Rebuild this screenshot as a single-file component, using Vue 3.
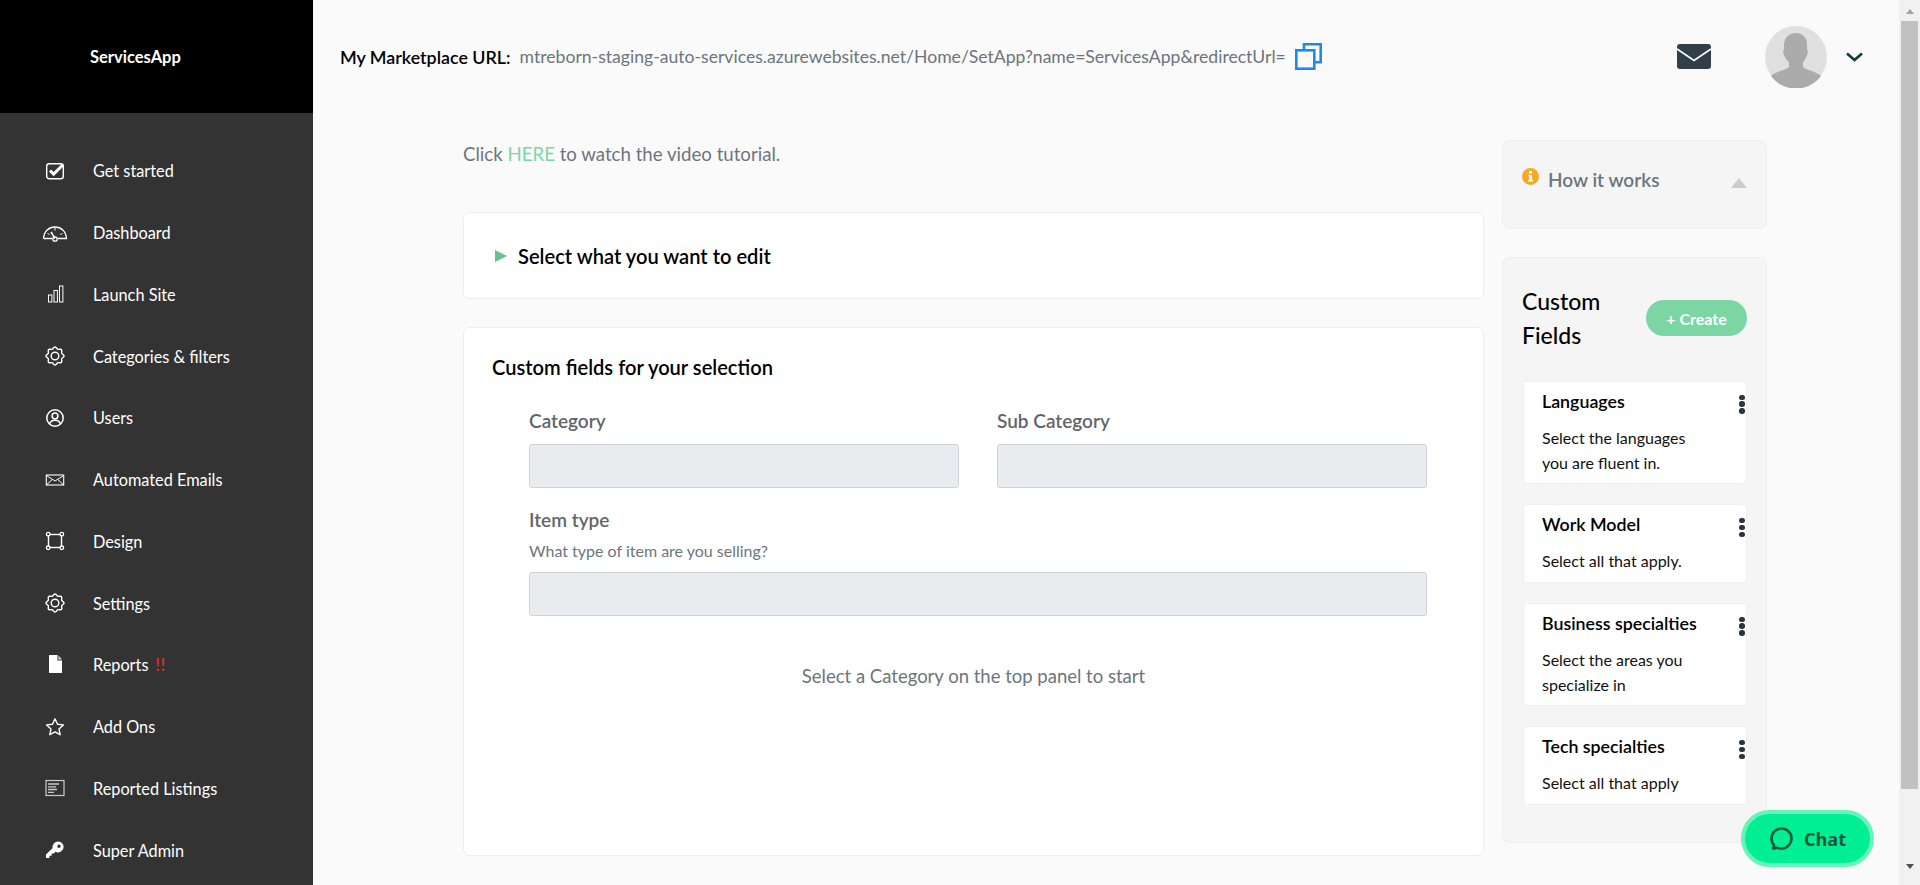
<script setup>
const nav = [
  { label: 'Get started', icon: 'check' },
  { label: 'Dashboard', icon: 'gauge' },
  { label: 'Launch Site', icon: 'bars' },
  { label: 'Categories & filters', icon: 'gear' },
  { label: 'Users', icon: 'user' },
  { label: 'Automated Emails', icon: 'mail' },
  { label: 'Design', icon: 'design' },
  { label: 'Settings', icon: 'gear' },
  { label: 'Reports', icon: 'file', alert: '!!' },
  { label: 'Add Ons', icon: 'star' },
  { label: 'Reported Listings', icon: 'list' },
  { label: 'Super Admin', icon: 'key' }
]
const fields = [
  { title: 'Languages', text: 'Select the languages you are fluent in.' },
  { title: 'Work Model', text: 'Select all that apply.' },
  { title: 'Business specialties', text: 'Select the areas you specialize in' },
  { title: 'Tech specialties', text: 'Select all that apply' }
]
const gearPoints = Array.from({ length: 64 }, (_, i) => {
  const a = (i / 64) * Math.PI * 2
  const r = 8.1 + 0.9 * Math.cos(8 * a)
  return `${(10 + r * Math.cos(a)).toFixed(2)},${(10 + r * Math.sin(a)).toFixed(2)}`
}).join(' ')
</script>

<template>
  <div class="app">
    <aside class="sidebar">
      <div class="brand">ServicesApp</div>
      <nav class="nav">
        <a v-for="item in nav" :key="item.label" class="nav-item">
          <svg class="nav-icon" viewBox="0 0 20 20" fill="none" stroke="#fff" stroke-width="1.3">
            <template v-if="item.icon === 'check'">
              <rect x="1.7" y="2.7" width="16.600" height="15" rx="2.500" stroke-width="1.400" />
              <path d="M5 9.500l3.600 3.600L18 3.800" stroke-width="3" />
            </template>
            <template v-else-if="item.icon === 'gauge'">
              <path d="M-1.500 15.500C-1 8 4 4 10 4s11 4 11.500 11.500H13M7 15.500H-1.500" />
              <path d="M6 9l4 6.500" stroke-width="1.600" />
              <circle cx="10" cy="16" r="2.200" />
              <path d="M10 4.500v3M2.500 10.500l2 1M17.500 10.500l-2 1" stroke-width="1" />
            </template>
            <template v-else-if="item.icon === 'bars'">
              <rect x="3.500" y="11" width="3.400" height="7" stroke-width="1" />
              <rect x="9" y="6.500" width="3.400" height="11.500" stroke-width="1" />
              <rect x="14.500" y="2" width="3.400" height="16" stroke-width="1" />
            </template>
            <template v-else-if="item.icon === 'gear'">
              <polygon :points="gearPoints" stroke-width="1.400" />
              <circle cx="10" cy="10" r="3.800" stroke-width="1.400" />
            </template>
            <template v-else-if="item.icon === 'user'">
              <circle cx="10" cy="10" r="8.200" stroke-width="1.500" />
              <circle cx="10" cy="8" r="2.900" stroke-width="1.500" />
              <path d="M4.500 15.800c1-2.600 3-3.500 5.500-3.500s4.500.9 5.500 3.500" stroke-width="1.500" />
            </template>
            <template v-else-if="item.icon === 'mail'">
              <rect x="1.300" y="5" width="17.400" height="10" stroke-width="1.100" />
              <path d="M1.300 5.500l8.700 5.500 8.700-5.500M1.300 15l6-5.500M18.700 15l-6-5.500" stroke-width="1" />
            </template>
            <template v-else-if="item.icon === 'design'">
              <rect x="3.500" y="3.500" width="13" height="13" stroke-width="1.400" />
              <circle cx="3.200" cy="3.200" r="1.800" fill="#333" />
              <circle cx="16.800" cy="3.200" r="1.800" fill="#333" />
              <circle cx="3.200" cy="16.800" r="1.800" fill="#333" />
              <circle cx="16.800" cy="16.800" r="1.800" fill="#333" />
            </template>
            <template v-else-if="item.icon === 'file'">
              <path d="M4 0h8.500v5.500H17V18H4z" fill="#fff" stroke="none" />
              <path d="M13.500 .5L17 4.500h-3.500z" fill="#ddd" stroke="none" />
            </template>
            <template v-else-if="item.icon === 'star'">
              <path d="M10 1.800l2.500 5.400 5.900.7-4.400 4 1.200 5.800-5.200-2.900-5.200 2.900L6 11.900l-4.400-4 5.900-.7z" stroke-width="1.400" stroke-linejoin="round" />
            </template>
            <template v-else-if="item.icon === 'list'">
              <rect x="1" y="2.500" width="18" height="15" stroke="#ccc" stroke-width="1.200" />
              <path d="M3 6h11M3 8.800h8M3 11.500h9M3 14.300h6" stroke="#ccc" stroke-width="1.300" />
            </template>
            <template v-else>
              <path d="M13 1.500a5.500 5.500 0 1 1-2.600 10.300l-1.600 1.700H6.600v2.200H4.400v2.300H1v-3.400l6.600-6.700A5.500 5.500 0 0 1 13 1.500zm1 3a1.700 1.700 0 1 0 0 3.400 1.700 1.700 0 0 0 0-3.400z" fill="#fff" stroke="none" fill-rule="evenodd" />
            </template>
          </svg>
          <span>{{ item.label }}</span>
          <span v-if="item.alert" class="alert">{{ item.alert }}</span>
        </a>
      </nav>
    </aside>

    <div class="main">
      <header class="topbar">
        <strong class="url-label">My Marketplace URL:</strong>
        <span class="url">mtreborn-staging-auto-services.azurewebsites.net/Home/SetApp?name=ServicesApp&amp;redirectUrl=</span>
        <svg class="copy" viewBox="0 0 27 27" fill="none" stroke="#1e88e5" stroke-width="2.600">
          <path d="M9 6.500V1.300h16.700v17.900h-6" />
          <rect x="1.300" y="7.300" width="18" height="18.400" />
        </svg>
        <svg class="envelope" viewBox="0 0 34 25">
          <rect width="34" height="25" rx="3" fill="#333f48" />
          <path d="M0 5l17 11.500L34 5" fill="none" stroke="#fff" stroke-width="1.800" />
        </svg>
        <svg class="avatar" viewBox="0 0 62 62">
          <circle cx="31" cy="31" r="31" fill="#e0e0e0" />
          <path d="M31 7c8 0 11 6 11 12 0 3 0 5 1 7-1 4-3 8-5 10v5c3 3 11 4 15 7a9 9 0 0 1 3 2 31 31 0 0 1-50 0c1-1 2-2 4-3 4-2 11-3 14-6v-5c-3-2-5-6-6-10 1-2 1-4 1-7 0-6 4-12 12-12z" fill="#ababab" />
        </svg>
        <svg class="chevron" viewBox="0 0 17 10" fill="none" stroke="#0d3b3e" stroke-width="2.600">
          <path d="M1 1.500l7.500 6.500 7.500-6.500" />
        </svg>
      </header>

      <div class="content">
        <section class="left">
          <p class="tutorial">Click <a class="here">HERE</a> to watch the video tutorial.</p>
          <div class="panel select-panel">
            <i class="play"></i>
            <h2>Select what you want to edit</h2>
          </div>
          <div class="panel fields-panel">
            <h2>Custom fields for your selection</h2>
            <div class="form">
              <div class="group">
                <label>Category</label>
                <div class="input"></div>
              </div>
              <div class="group">
                <label>Sub Category</label>
                <div class="input"></div>
              </div>
              <div class="group wide">
                <label>Item type</label>
                <small>What type of item are you selling?</small>
                <div class="input"></div>
              </div>
            </div>
            <p class="hint">Select a Category on the top panel to start</p>
          </div>
        </section>

        <aside class="right">
          <div class="side-card how">
            <svg class="info" viewBox="0 0 17 17">
              <circle cx="8.500" cy="8.500" r="8.500" fill="#f9a825" />
              <rect x="7" y="3" width="3" height="2.600" fill="#fff" />
              <path d="M6.300 7h3.700v5h1v1.500H6.300V12h1V8.500h-1z" fill="#fff" />
            </svg>
            <span class="how-text">How it works</span>
            <i class="caret"></i>
          </div>
          <div class="side-card custom">
            <div class="custom-head">
              <h3>Custom Fields</h3>
              <button class="create">+ Create</button>
            </div>
            <div v-for="f in fields" :key="f.title" class="field">
              <h4>{{ f.title }}</h4>
              <p>{{ f.text }}</p>
              <span class="dots"><i></i><i></i><i></i></span>
            </div>
          </div>
        </aside>
      </div>
    </div>

    <div class="scrollbar">
      <i class="arrow up"></i>
      <div class="thumb"></div>
      <i class="arrow down"></i>
    </div>

    <button class="chat">
      <svg viewBox="0 0 24 24" fill="none" stroke="#0b5a3d" stroke-width="2.600">
        <path d="M4 22c.8-1.200 1.200-2.200 1-3.400A10 10 0 1 1 12 22c-2 0-3-.3-4-.8-1.200.7-2.500.9-4 .8z" stroke-linejoin="round" />
      </svg>
      <span>Chat</span>
    </button>
  </div>
</template>

<style>
html, body { margin: 0; overflow: hidden; }
</style>

<style scoped>
* { box-sizing: border-box; }
.app {
  position: relative;
  display: flex;
  width: 1920px;
  height: 885px;
  overflow: hidden;
  background: #fafafa;
  font-family: Lato, "Liberation Sans", sans-serif;
  color: #6c757d;
}
.sidebar { width: 313px; flex: none; background: #333; color: #fff; }
.brand {
  height: 113px;
  background: #000;
  display: flex;
  align-items: center;
  padding-left: 90px;
  font-size: 16.500px;
  font-weight: 700;
}
.nav { padding-top: 27px; display: flex; flex-direction: column; }
.nav-item {
  height: 61.750px;
  display: flex;
  align-items: center;
  padding-left: 45px;
  font-size: 16.300px;
}
.nav-icon { width: 20px; height: 20px; margin-right: 28px; flex: none; overflow: visible; }
.alert { color: #f4311b; margin-left: 7px; letter-spacing: 1px; }

.main { flex: 1; min-width: 0; }
.topbar {
  height: 113px;
  display: flex;
  align-items: center;
  padding-left: 27px;
}
.url-label { color: #000; font-size: 17.850px; font-weight: 600; }
.url { font-size: 17.600px; margin-left: 9px; }
.copy { width: 27px; height: 27px; margin-left: 9px; }
.envelope { width: 34px; height: 25px; margin-left: 355px; }
.avatar { width: 62px; height: 62px; margin-left: 54px; }
.chevron { width: 17px; height: 10px; margin-left: 19px; }

.content {
  display: flex;
  gap: 18px;
  padding: 27px 0 0 150px;
  align-items: flex-start;
}
.left { width: 1021px; flex: none; }
.right { width: 265px; flex: none; }
.tutorial { margin: 0; font-size: 18.650px; line-height: 28px; height: 72px; }
.here { color: #7bd6a4; }
.panel {
  background: #fff;
  border: 1px solid #eee;
  border-radius: 6px;
}
h2 { margin: 0; color: #000; font-size: 20.100px; font-weight: 600; }
.select-panel {
  height: 87px;
  display: flex;
  align-items: center;
  padding-left: 31px;
}
.play {
  width: 0;
  height: 0;
  border-left: 12px solid #6bbf8f;
  border-top: 6px solid transparent;
  border-bottom: 6px solid transparent;
  margin-right: 11px;
}
.fields-panel {
  margin-top: 28px;
  height: 529px;
  padding: 27px 0 0 28px;
}
.form {
  width: 898px;
  margin: 29px 0 0 37px;
  display: grid;
  grid-template-columns: 430px 430px;
  column-gap: 38px;
}
.group label {
  display: block;
  color: #5f656b;
  font-size: 19px;
  font-weight: 600;
  line-height: 26px;
  margin-bottom: 10px;
}
.group small {
  display: block;
  font-size: 16px;
  line-height: 20px;
  margin: -2px 0 11px;
}
.wide { grid-column: 1 / 3; margin-top: 19px; }
.input {
  height: 44px;
  background: #e9ecef;
  border: 1px solid #ced4da;
  border-radius: 3px;
}
.hint { margin: 47px 0 0; text-align: center; font-size: 18.500px; line-height: 26px; padding-right: 28px; }

.side-card {
  background: #f5f5f5;
  border: 1px solid #eee;
  border-radius: 8px;
}
.how {
  height: 89px;
  display: flex;
  align-items: flex-start;
  padding: 27px 19px 0 19px;
}
.info { width: 17px; height: 17px; flex: none; }
.how-text { font-size: 19px; font-weight: 600; margin-left: 9px; line-height: 22px; margin-top: 1px; }
.caret {
  width: 0;
  height: 0;
  margin: 10px 0 0 auto;
  border-left: 8.500px solid transparent;
  border-right: 8.500px solid transparent;
  border-bottom: 10px solid #ccc;
}
.custom { margin-top: 28px; height: 586px; padding: 26px 19px 0 19px; }
.custom-head { display: flex; align-items: center; justify-content: space-between; margin-bottom: 28.500px; }
h3 { margin: 0; width: 90px; color: #000; font-size: 23px; font-weight: 500; line-height: 34px; }
.create {
  width: 101px;
  height: 36px;
  border: 0;
  border-radius: 18px;
  background: #7bd6a4;
  color: #fff;
  font: 700 16px Lato, sans-serif;
}
.field {
  position: relative;
  background: #fff;
  border: 1px solid #f0f0f0;
  border-radius: 4px;
  padding: 6px 48px 8.500px 18px;
  margin: 0 0 20px 1px;
  width: 224px;
}
h4 { margin: 0; color: #000; font-size: 17.800px; font-weight: 600; line-height: 26px; white-space: nowrap; }
.field p { margin: 11px 0 0; color: #111; font-size: 16px; line-height: 25px; }
.dots { position: absolute; top: 13px; right: 1.500px; display: flex; flex-direction: column; gap: 1.600px; }
.dots i { width: 5.400px; height: 5.400px; border-radius: 50%; background: #283444; }

.scrollbar {
  width: 21px;
  flex: none;
  background: #f1f1f1;
  display: flex;
  flex-direction: column;
  align-items: center;
  padding-top: 9px;
}
.arrow { width: 0; height: 0; border-left: 4.500px solid transparent; border-right: 4.500px solid transparent; }
.up { border-bottom: 5px solid #a3a3a3; }
.down { border-top: 5px solid #505050; margin-top: 75px; }
.thumb { width: 17px; height: 768px; margin-top: 7px; background: #c1c1c1; }

.chat {
  position: absolute;
  left: 1741px;
  top: 810px;
  width: 133px;
  height: 57px;
  display: flex;
  align-items: center;
  justify-content: center;
  gap: 11px;
  border: 4px solid #66f4bb;
  border-radius: 29px;
  background: #00ef94;
  color: #0b5a3d;
  font: 700 18px "Open Sans", sans-serif;
  padding: 0;
}
.chat svg { width: 24px; height: 25px; }
</style>
